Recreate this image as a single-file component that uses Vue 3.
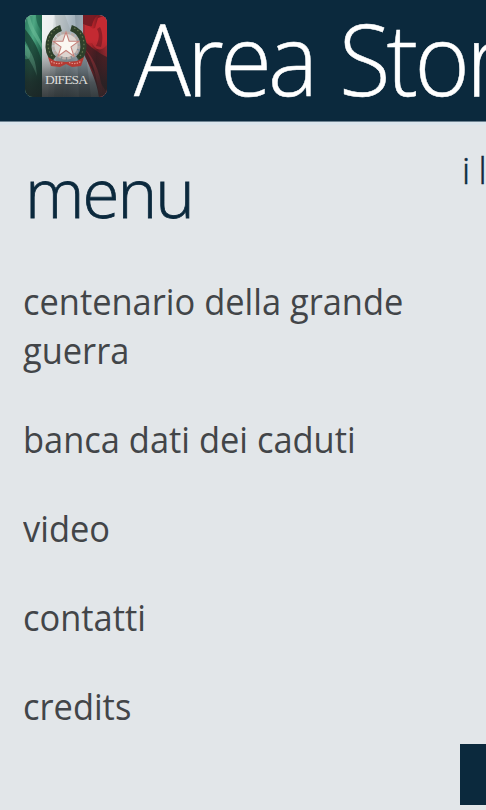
<template>
  <div class="screen">
    <header class="header">
      <svg class="logo" viewBox="0 0 82 82" aria-label="Difesa">
        <defs>
          <linearGradient id="green" x1="0" y1="0" x2="1" y2="0.3">
            <stop offset="0" stop-color="#2c7b60" />
            <stop offset="0.5" stop-color="#4fa884" />
            <stop offset="1" stop-color="#1d6a4f" />
          </linearGradient>
          <linearGradient id="white" x1="0" y1="0" x2="1" y2="0.1">
            <stop offset="0.2" stop-color="#eceeef" />
            <stop offset="0.4" stop-color="#d3d9dc" />
            <stop offset="0.6" stop-color="#a3b1bb" />
            <stop offset="0.75" stop-color="#c5d1dc" />
          </linearGradient>
          <linearGradient id="red" x1="0" y1="0" x2="1" y2="0.2">
            <stop offset="0" stop-color="#9c3038" />
            <stop offset="0.4" stop-color="#b9232a" />
            <stop offset="0.65" stop-color="#701b22" />
            <stop offset="1" stop-color="#a92830" />
          </linearGradient>
          <linearGradient id="shade" x1="0" y1="0" x2="0" y2="1">
            <stop offset="0.3" stop-color="#1c2224" stop-opacity="0" />
            <stop offset="0.62" stop-color="#1c2224" stop-opacity="0.4" />
            <stop offset="0.82" stop-color="#1c2224" stop-opacity="0.72" />
            <stop offset="1" stop-color="#1c2224" stop-opacity="0.85" />
          </linearGradient>
          <clipPath id="frame"><rect width="82" height="82" rx="8" /></clipPath>
        </defs>
        <g clip-path="url(#frame)">
          <rect width="82" height="82" fill="url(#white)" />
          <path d="M17 0h12l-6 82h-6z" fill="#f5f7f7" opacity=".6" />
          <path d="M30 0h10l5 14-7 68h-9l3-55z" fill="#8f9799" opacity=".3" />
          <path d="M50 0h8l2 30 6 52H54z" fill="#5e6f7c" opacity=".35" />
          <path d="M0 0h17v82H0z" fill="url(#green)" />
          <path d="M0 14c7 9 14 19 17 34v34H0V44c7 2 7-8 0-18z" fill="#143d30" opacity=".75" />
          <path d="M2 3c2 14 10 20 15 32v-6C13 18 6 12 5 0zM0 29c8 9 11 18 12 32C8 51 4 43 0 40z" fill="#6abd98" opacity=".6" />
          <path d="M11 0c0 8 3 12 6 17V0z" fill="#1c6048" opacity=".7" />
          <path d="M58 0h24v82H74C71 58 57 44 58 24z" fill="url(#red)" />
          <path d="M60 10c5-1 6 5 10 3l3-10 9-3v30c-7 8-12 4-15-2l-7 1z" fill="#c42a32" />
          <path d="M58 0h15c-4 3-5 7-6 11-3 1-5-1-9-2z" fill="#6d1922" opacity=".8" />
          <path d="M72 14c3 5 2 11-1 17l5 1c2-6 2-14-1-20z" fill="#7e1a22" opacity=".7" />
          <path d="M58 24c7 8 16 14 24 18v36C72 62 64 50 58 38z" fill="#3d1c22" opacity=".75" />
          <path d="M60 34c8 12 12 28 14 48h4C77 62 70 44 60 34z" fill="#b3333b" opacity=".7" />
          <rect width="82" height="82" fill="url(#shade)" />
          <path d="M36 13c-14 4-16 24-7 31M46 13c14 4 16 24 7 31" fill="none" stroke="#2e402b" stroke-width="6.2" />
          <path d="M33 13c-12 6-13 22-4 30M49 13c12 6 13 22 4 30" fill="none" stroke="#66754f" stroke-width="1.2" stroke-dasharray="1.5 2.4" />
          <circle cx="41" cy="30.500" r="12.5" fill="none" stroke="#b9aca6" stroke-width="3" stroke-dasharray="3.6 1.3" />
          <circle cx="41" cy="30.500" r="11.5" fill="#ddd5d0" />
          <path d="m41 17 3.1 9.200h9.700l-7.8 5.700 2.900 9.300-7.9-5.700-7.9 5.700 2.900-9.300-7.8-5.700h9.700z" fill="#fbf8f2" stroke="#c4827c" stroke-width="1.1" />
          <path d="m23 42 7 4 11 1 11-1 7-4-3 9-9 1-6-3-6 3-9-1z" fill="#b53a33" />
          <path d="M26 46.500q6 3.500 12 1m6 0q6 2.500 12-1" fill="none" stroke="#e4988d" stroke-width="1.2" stroke-dasharray="1.4 1.2" />
          <text x="41.5" y="68.500" text-anchor="middle" textLength="43" class="logo-name">DIFESA</text>
        </g>
      </svg>
      <h1 class="title">Area Stor</h1>
    </header>

    <main class="panorama">
      <section class="menu">
        <h2 class="menu-title">menu</h2>
        <ul class="menu-list">
          <li v-for="item in items" :key="item">{{ item }}</li>
        </ul>
      </section>
      <aside class="next">
        <span class="next-title">i l</span>
        <div class="next-tile"></div>
      </aside>
    </main>
  </div>
</template>

<script setup>
const items = [
  'centenario della grande guerra',
  'banca dati dei caduti',
  'video',
  'contatti',
  'credits'
]
</script>

<style>
body {
  margin: 0;
}
</style>

<style scoped>
.screen {
  width: 486px;
  height: 810px;
  overflow: hidden;
  background: #e2e6e9;
  font-family: "Open Sans", "Noto Sans", sans-serif;
}

.header {
  display: flex;
  align-items: flex-start;
  box-sizing: border-box;
  height: 122px;
  padding: 15px 0 0 25px;
  background: #0b293d;
  border-bottom: 1px solid #6f8492;
  overflow: hidden;
}

.logo {
  flex: none;
  width: 82px;
  height: 82px;
}

.logo-name {
  font-family: "Liberation Serif", serif;
  font-size: 13.5px;
  fill: #dededb;
}

.title {
  flex: none;
  margin: -25px 0 0 27px;
  color: #fff;
  font-size: 99px;
  font-weight: 300;
  line-height: 135px;
  letter-spacing: -4px;
  word-spacing: 4px;
  white-space: nowrap;
  -webkit-text-stroke: 0.5px #fff;
  transform: scaleX(0.955);
  transform-origin: left;
}

.panorama {
  display: flex;
  height: 688px;
  box-sizing: border-box;
  border-top: 3px solid #dce6ed;
}

.menu {
  flex: none;
  width: 460px;
}

.menu-title {
  margin: 19px 0 0 25px;
  color: #0b293d;
  font-size: 69px;
  font-weight: 300;
  line-height: 94px;
  letter-spacing: -2px;
  -webkit-text-stroke: 0.8px #0b293d;
  transform: scaleX(0.975);
  transform-origin: left;
}

.menu-list {
  display: flex;
  flex-direction: column;
  gap: 40px;
  width: 420px;
  margin: 39px 0 0 23px;
  padding: 0;
  list-style: none;
  color: #424548;
  font-size: 36px;
  line-height: 49px;
  transform: scaleX(0.956);
  transform-origin: left;
}

.next {
  display: flex;
  flex-direction: column;
  justify-content: space-between;
  flex: none;
  width: 120px;
}

.next-title {
  margin-top: 21px;
  padding-left: 2px;
  color: #0b293d;
  font-size: 36px;
  font-weight: 300;
  line-height: 49px;
  letter-spacing: -0.5px;
  white-space: nowrap;
  -webkit-text-stroke: 0.5px #0b293d;
}

.next-tile {
  height: 61px;
  margin-bottom: 5px;
  background: #0b293d;
}
</style>
